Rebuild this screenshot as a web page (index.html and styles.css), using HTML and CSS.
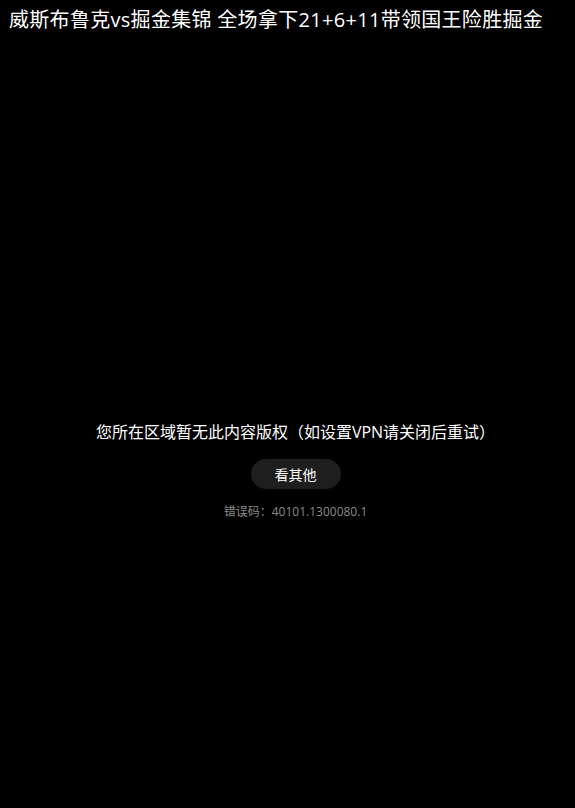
FILE: index.html
```html
<!DOCTYPE html>
<html lang="zh-CN">
<head>
<meta charset="utf-8">
<link rel="stylesheet" href="styles.css">
</head>
<body>
<div class="page">
  <h1 class="title">威斯布鲁克vs掘金集锦 全场拿下21+6+11带领国王险胜掘金</h1>
  <div class="notice">
    <p class="msg">您所在区域暂无此内容版权（如设置VPN请关闭后重试）</p>
    <button class="btn">看其他</button>
    <p class="code">错误码：40101.1300080.1</p>
  </div>
</div>
</body>
</html>
```
FILE: styles.css
```css
html, body {
  margin: 0;
  padding: 0;
  background: #000;
}
body {
  font-family: "Open Sans", "Noto Sans CJK SC", sans-serif;
  color: #fff;
}
.page {
  width: 575px;
  height: 808px;
  display: flex;
  flex-direction: column;
}
.title {
  margin: 0;
  padding: 6px 9px 0;
  font-size: 20px;
  font-weight: 400;
  line-height: 28px;
  letter-spacing: 0.3px;
  white-space: nowrap;
}
.notice {
  display: flex;
  flex-direction: column;
  align-items: center;
  padding: 386px 0 0 16px;
}
.msg {
  margin: 0;
  font-size: 16px;
  line-height: 24px;
}
.btn {
  margin-top: 15px;
  width: 90px;
  height: 30px;
  border: none;
  border-radius: 15px;
  background: #1e1e1e;
  color: #fff;
  font-family: inherit;
  font-size: 14px;
  padding: 0;
}
.code {
  margin: 14px 0 0;
  font-size: 12px;
  line-height: 18px;
  color: #8a8a8a;
}
```
